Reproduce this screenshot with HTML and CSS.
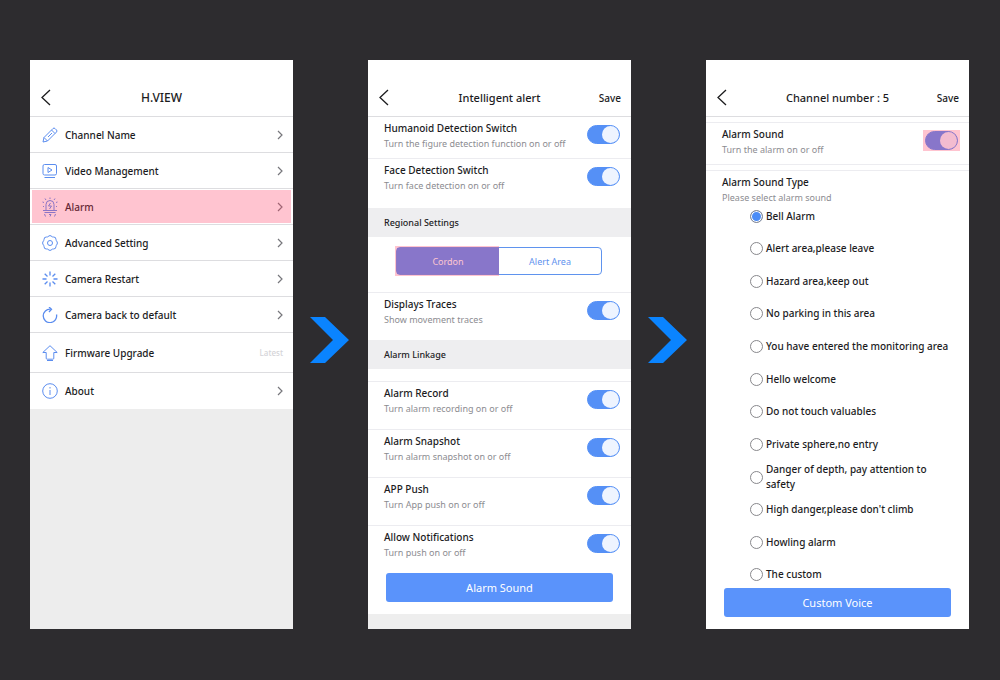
FILE: index.html
```html
<!DOCTYPE html>
<html lang="en">
<head>
  <meta charset="UTF-8">
  <meta name="viewport" content="width=device-width, initial-scale=1.0">
  <title>H.VIEW | Alarm Sound</title>
  <link rel="stylesheet" href="styles.css">
</head>
<body>
  <main class="steps">
    <!-- Step 1: device menu -->
    <section class="phone phone-menu">
      <header class="topbar">
        <button class="back" aria-label="Back"><svg width="11" height="17" viewBox="0 0 11 17"><path d="M10 1L2 8.500L10 16"/></svg></button>
        <h1>H.VIEW</h1>
      </header>
      <nav class="menu">
        <a href="#name">
          <svg class="icon" viewBox="0 0 16 16"><path d="M1 15l1-4.500L11 1.500q1-1 2 0l1.500 1.500q1 1 0 2L5.500 14zM9.500 3l3.500 3.500M2 10.500L5.500 14M6 10l4-4"/></svg>
          <span>Channel Name</span><svg class="chevron" viewBox="0 0 6 10"><path d="M1 1l4 4-4 4"/></svg>
        </a>
        <a href="#video">
          <svg class="icon" viewBox="0 0 16 16"><path d="M4 12H2.500Q1 12 1 10.500V3Q1 1.500 2.500 1.500H13Q14.500 1.500 14.500 3v7.500Q14.500 12 13 12H4M6 4.500v5L10 7zM2.500 14.500H13"/></svg>
          <span>Video Management</span><svg class="chevron" viewBox="0 0 6 10"><path d="M1 1l4 4-4 4"/></svg>
        </a>
        <a href="#alarm" class="marked">
          <svg class="icon icon-alarm" viewBox="0 0 16 20"><path d="M4 13V7.500a4 4 0 0 1 8 0V13M1 13.500h14M2.500 15.500h11M8 .5V2M3 1.500l1 1.500M13 1.500L12 3M.5 5l1.500.5M15.500 5L14 5.500M1 9.500h1M14 9.500h1M8.500 6L6.500 9h3l-2 3M2.500 17l1 2.500M7 17.500h2L8 19.500M13.500 17l-1 2.500"/></svg>
          <span>Alarm</span><svg class="chevron" viewBox="0 0 6 10"><path d="M1 1l4 4-4 4"/></svg>
        </a>
        <a href="#advanced">
          <svg class="icon" viewBox="0 0 16 16"><path d="M6 1.500Q8-.5 10 1.500q.5.700 1.500.5 2.500-.2 2.500 2.500 0 1 .7 1.500 1.500 2 0 4-.7.500-.7 1.500 0 2.500-2.500 2.500-1-.2-1.500.5-2 2-4 0-.5-.7-1.500-.5-2.500.2-2.500-2.500 0-1-.7-1.500-1.500-2 0-4Q2 5.500 2 4.500 2 1.800 4.500 2q1 .2 1.500-.5z"/><circle cx="8" cy="8" r="2.500"/></svg>
          <span>Advanced Setting</span><svg class="chevron" viewBox="0 0 6 10"><path d="M1 1l4 4-4 4"/></svg>
        </a>
        <a href="#restart">
          <svg class="icon icon-bold" viewBox="0 0 16 16"><path d="M8 .5v4M8 11.500v4M.5 8h4M11.500 8h4M2.700 2.700l2.800 2.800M10.500 10.500l2.800 2.800M2.700 13.300l2.800-2.800M10.500 5.500l2.800-2.800"/></svg>
          <span>Camera Restart</span><svg class="chevron" viewBox="0 0 6 10"><path d="M1 1l4 4-4 4"/></svg>
        </a>
        <a href="#default">
          <svg class="icon icon-bold" viewBox="0 0 16 16"><path d="M14.500 7.500A6.700 6.700 0 1 1 8.500 2.200M7 0l2.500 2.200L7 5"/></svg>
          <span>Camera back to default</span><svg class="chevron" viewBox="0 0 6 10"><path d="M1 1l4 4-4 4"/></svg>
        </a>
        <a href="#firmware" class="firmware">
          <svg class="icon" viewBox="0 0 16 16"><path d="M8 .7L.8 7.500h3.400v5.700q0 1 1 1h5.600q1 0 1-1V7.500h3.400zM5 15.500h6"/></svg>
          <span>Firmware Upgrade</span><small>Latest</small>
        </a>
        <a href="#about">
          <svg class="icon" viewBox="0 0 16 16"><circle cx="8" cy="8" r="7.300"/><path d="M8 7v5M8 4v1.500"/></svg>
          <span>About</span><svg class="chevron" viewBox="0 0 6 10"><path d="M1 1l4 4-4 4"/></svg>
        </a>
      </nav>
    </section>

    <svg class="arrow" viewBox="0 0 39 46"><path d="M0 0H15L39 23L15 46H0L23 23z"/></svg>

    <!-- Step 2: intelligent alert -->
    <section class="phone phone-alert">
      <header class="topbar">
        <button class="back" aria-label="Back"><svg width="11" height="17" viewBox="0 0 11 17"><path d="M10 1L2 8.500L10 16"/></svg></button>
        <h1>Intelligent alert</h1>
        <button class="save">Save</button>
      </header>
      <label class="setting compact">
        <span class="text"><b>Humanoid Detection Switch</b><small>Turn the figure detection function on or off</small></span>
        <input type="checkbox" class="toggle" checked>
      </label>
      <label class="setting tall">
        <span class="text"><b>Face Detection Switch</b><small>Turn face detection on or off</small></span>
        <input type="checkbox" class="toggle" checked>
      </label>
      <h2>Regional Settings</h2>
      <div class="tabs">
        <button class="active">Cordon</button>
        <button>Alert Area</button>
      </div>
      <label class="setting">
        <span class="text"><b>Displays Traces</b><small>Show movement traces</small></span>
        <input type="checkbox" class="toggle" checked>
      </label>
      <h2>Alarm Linkage</h2>
      <div class="linkage">
        <label class="setting">
          <span class="text"><b>Alarm Record</b><small>Turn alarm recording on or off</small></span>
          <input type="checkbox" class="toggle" checked>
        </label>
        <label class="setting">
          <span class="text"><b>Alarm Snapshot</b><small>Turn alarm snapshot on or off</small></span>
          <input type="checkbox" class="toggle" checked>
        </label>
        <label class="setting">
          <span class="text"><b>APP Push</b><small>Turn App push on or off</small></span>
          <input type="checkbox" class="toggle" checked>
        </label>
        <label class="setting">
          <span class="text"><b>Allow Notifications</b><small>Turn push on or off</small></span>
          <input type="checkbox" class="toggle" checked>
        </label>
      </div>
      <button class="primary">Alarm Sound</button>
      <div class="footer"></div>
    </section>

    <svg class="arrow" viewBox="0 0 39 46"><path d="M0 0H15L39 23L15 46H0L23 23z"/></svg>

    <!-- Step 3: alarm sound -->
    <section class="phone phone-sound">
      <header class="topbar">
        <button class="back" aria-label="Back"><svg width="11" height="17" viewBox="0 0 11 17"><path d="M10 1L2 8.500L10 16"/></svg></button>
        <h1>Channel number : 5</h1>
        <button class="save">Save</button>
      </header>
      <label class="setting switch">
        <span class="text"><b>Alarm Sound</b><small>Turn the alarm on or off</small></span>
        <span class="toggle-mark"><input type="checkbox" class="toggle" checked></span>
      </label>
      <div class="setting types">
        <span class="text"><b>Alarm Sound Type</b><small>Please select alarm sound</small></span>
      </div>
      <div class="sounds">
        <label><input type="radio" name="sound" checked><span>Bell Alarm</span></label>
        <label><input type="radio" name="sound"><span>Alert area,please leave</span></label>
        <label><input type="radio" name="sound"><span>Hazard area,keep out</span></label>
        <label><input type="radio" name="sound"><span>No parking in this area</span></label>
        <label><input type="radio" name="sound"><span>You have entered the monitoring area</span></label>
        <label><input type="radio" name="sound"><span>Hello welcome</span></label>
        <label><input type="radio" name="sound"><span>Do not touch valuables</span></label>
        <label><input type="radio" name="sound"><span>Private sphere,no entry</span></label>
        <label><input type="radio" name="sound"><span>Danger of depth, pay attention to<br>safety</span></label>
        <label><input type="radio" name="sound"><span>High danger,please don't climb</span></label>
        <label><input type="radio" name="sound"><span>Howling alarm</span></label>
        <label><input type="radio" name="sound"><span>The custom</span></label>
      </div>
      <button class="primary">Custom Voice</button>
    </section>
  </main>
</body>
</html>
```
FILE: styles.css
```css
* {
  box-sizing: border-box;
}

body {
  margin: 0;
  background: #2d2c2f;
  color: #1c1c1e;
  font-family: "Noto Sans", "Open Sans", sans-serif;
  font-size: 10px;
  font-weight: 500;
}

button {
  font: inherit;
  color: inherit;
  background: none;
  border: none;
  padding: 0;
  cursor: pointer;
}

.steps {
  display: grid;
  grid-template-columns: 1fr 75px 1fr 75px 1fr;
  min-height: 100vh;
  padding: 60px 31px 51px 30px;
}

.arrow {
  width: 39px;
  height: 46px;
  place-self: center;
  fill: #0a84ff;
  margin: 0 2px 9px 0;
}

.phone {
  display: flex;
  flex-direction: column;
  background: #fff;
}

.phone-menu {
  background: #ededed;
}

/* Top bar */
.topbar {
  display: grid;
  grid-template-columns: 1fr auto 1fr;
  align-items: center;
  height: 57px;
  padding: 19px 10px 0;
  background: #fff;
  border-bottom: 1px solid #dddde0;
}

.topbar h1 {
  margin: 0;
  font-size: 11px;
  font-weight: 500;
}

.phone-menu h1 {
  font-size: 12px;
}

.back {
  justify-self: start;
  height: 17px;
}

.back svg {
  display: block;
  fill: none;
  stroke: #1c1c1e;
  stroke-width: 1.3;
}

.save {
  justify-self: end;
}

/* Device menu */
.menu a {
  position: relative;
  display: flex;
  align-items: center;
  gap: 7px;
  height: 36px;
  padding: 0 10px 0 12px;
  background: #fff;
  border-bottom: 1px solid #dddde0;
  color: inherit;
  text-decoration: none;
}

.menu span {
  flex: 1;
}

.menu small {
  color: #d4d4d8;
  font-size: 8px;
}

.menu .firmware {
  height: 40px;
}

.menu a:last-child {
  border-bottom: none;
}

.icon {
  width: 16px;
  height: 16px;
  fill: none;
  stroke: #5b8def;
  stroke-width: 1;
}

.icon-alarm {
  height: 20px;
}

.icon-bold {
  stroke-width: 1.3;
}

.chevron {
  width: 6px;
  height: 10px;
  fill: none;
  stroke: #77777c;
  stroke-width: 1.2;
}

/* Pink marker over the control to tap */
.marked::after,
.tabs .active::after,
.toggle-mark::after {
  content: "";
  position: absolute;
  inset: 1px 2px;
  background: rgba(255, 60, 100, 0.3);
}

/* Settings */
.setting {
  display: flex;
  justify-content: space-between;
  align-items: flex-start;
  min-height: 48px;
  padding: 4px 11px 0 16px;
  border-top: 1px solid #ececf0;
}

.compact {
  min-height: 41px;
  border-top: none;
}

.tall {
  min-height: 50px;
}

.text b,
.text small {
  display: block;
  font-size: 10px;
  font-weight: 500;
  line-height: 15px;
}

.text small {
  color: #8c8c91;
  font-size: 9px;
  font-weight: 400;
}

.toggle {
  appearance: none;
  display: flex;
  justify-content: flex-end;
  width: 33px;
  height: 19px;
  margin: 4px 0 0;
  border: 1px solid #5590f6;
  border-radius: 10px;
  background: #5590f6;
}

.toggle::before {
  content: "";
  width: 17px;
  height: 17px;
  border-radius: 50%;
  background: #eef4ff;
}

.phone h2 {
  margin: 0;
  padding-left: 16px;
  background: #eeeef0;
  font-size: 9px;
  font-weight: 500;
  line-height: 29px;
}

.tabs {
  display: flex;
  margin: 10px 29px 17px 28px;
  border: 1px solid #5f93ee;
  border-radius: 4px;
  color: #5f93ee;
  font-size: 9px;
}

.tabs button {
  position: relative;
  flex: 1;
  height: 26px;
  font-weight: 400;
}

.tabs .active {
  background: #5590f6;
  color: #fff;
}

.tabs .active::after {
  inset: -2px 0 -2px -2px;
}

.linkage {
  margin-top: 12px;
}

.primary {
  height: 29px;
  margin: 0 18px;
  border-radius: 3px;
  background: #5a93fb;
  color: #fff;
  font-size: 11px;
  font-weight: 400;
}

.footer {
  flex: 1;
  margin-top: 12px;
  background: #eeeeee;
}

/* Alarm sound */
.switch {
  min-height: 43px;
  margin-top: 5px;
  border-bottom: 1px solid #ececf0;
}

.types {
  min-height: 35px;
  margin-top: 5px;
}

.toggle-mark {
  position: relative;
}

.toggle-mark::after {
  inset: 3px -2px -1px;
}

.sounds {
  flex: 1;
  display: flex;
  flex-direction: column;
  justify-content: space-between;
  padding: 3px 10px 5px 44px;
}

.sounds label {
  display: flex;
  align-items: center;
  gap: 3px;
  height: 16px;
  line-height: 15px;
}

.sounds input {
  appearance: none;
  flex: none;
  width: 13px;
  height: 13px;
  margin: 0;
  border: 1px solid #88888c;
  border-radius: 50%;
}

.sounds input:checked {
  background: #4a8cf7;
  box-shadow: inset 0 0 0 1px #fff;
}

.phone-sound .primary {
  margin-bottom: 12px;
}
```
